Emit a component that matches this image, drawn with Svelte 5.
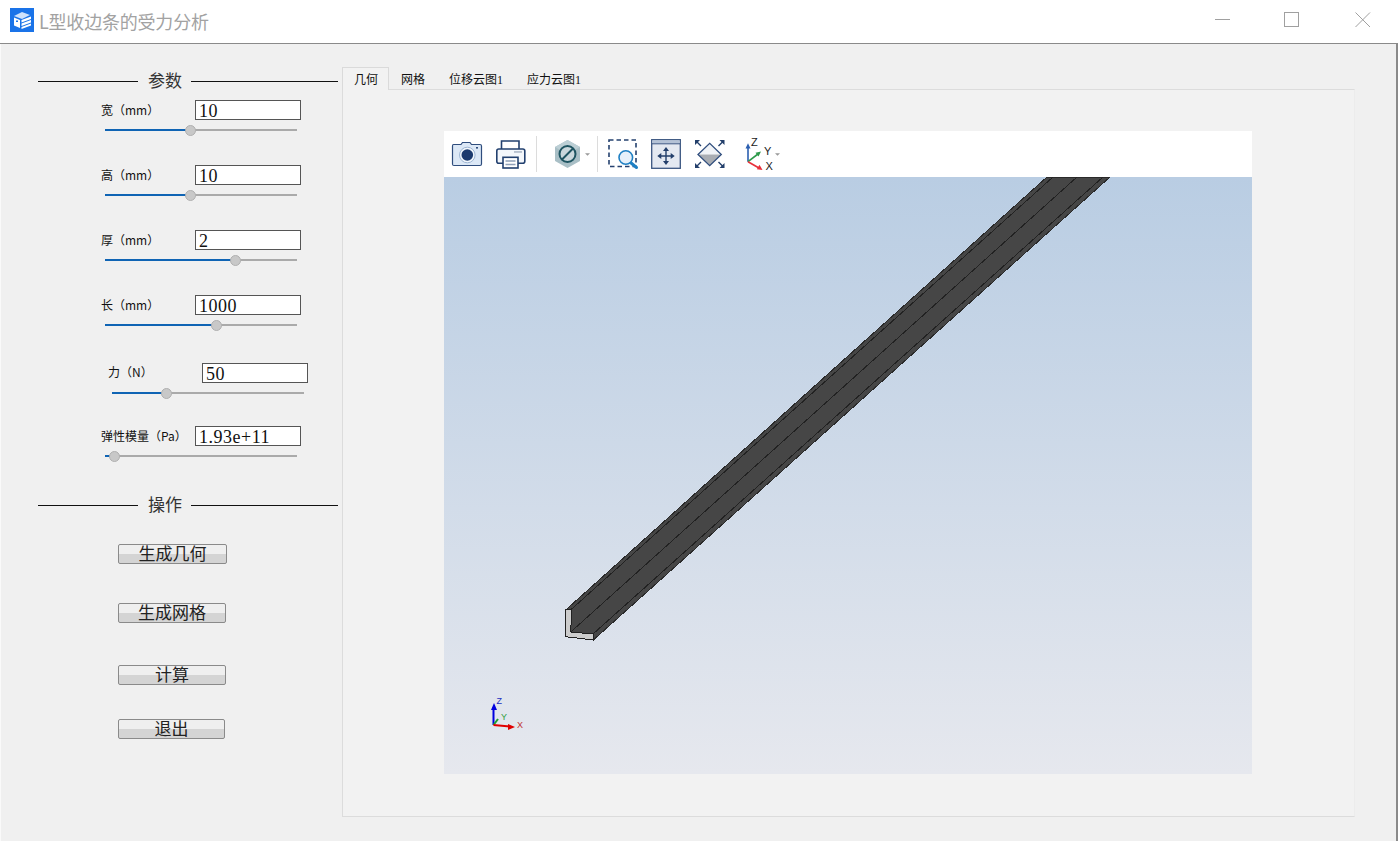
<script>
	const fields = [
		{ label: '宽（mm）', value: '10', thumb: 85.5, height: 65 },
		{ label: '高（mm）', value: '10', thumb: 85.5, height: 65 },
		{ label: '厚（mm）', value: '2', thumb: 130.5, height: 65 },
		{ label: '长（mm）', value: '1000', thumb: 111.5, height: 68 },
		{ label: '力（N）', value: '50', thumb: 54.5, height: 63, shifted: true },
		{ label: '弹性模量（Pa）', value: '1.93e+11', thumb: 9, height: 67 }
	];
	const buttons = [
		{ text: '生成几何', width: 109, top: 27 },
		{ text: '生成网格', width: 108, top: 39 },
		{ text: '计算', width: 108, top: 42 },
		{ text: '退出', width: 107, top: 34 }
	];
	const tabs = ['几何', '网格', '位移云图1', '应力云图1'];
</script>

<div class="titlebar">
	<svg class="app-icon" width="24" height="24" viewBox="0 0 24 24">
		<rect width="24" height="24" fill="#1a73e8" />
		<path d="M4 8 L12 4 L20 7 L12 11 Z" fill="#cfe2fb" />
		<path d="M4 9.5 L10 12 V20 L4 17.5 Z" fill="#fff" />
		<path d="M11.5 12 L21 8.5 V11 L11.5 14.5 Z M11.5 15.5 L21 12 V14.5 L11.5 18 Z M11.5 19 L21 15.5 V17.5 L11.5 21 Z" fill="#fff" />
		<path d="M6 12.5 H8 V14 H6 Z" fill="#1a73e8" />
	</svg>
	<span class="app-title">L型收边条的受力分析</span>
	<div class="win-controls">
		<svg class="win-min" width="16" height="16" viewBox="0 0 16 16"><path d="M0 7.5 H15" stroke="#a0a0a0" /></svg>
		<svg class="win-max" width="16" height="16" viewBox="0 0 16 16"><rect x="0.5" y="0.5" width="14" height="14" fill="none" stroke="#a0a0a0" /></svg>
		<svg class="win-close" width="16" height="16" viewBox="0 0 16 16"><path d="M0.5 0.5 L15 15 M15 0.5 L0.5 15" stroke="#a0a0a0" /></svg>
	</div>
</div>

<div class="main">
	<aside class="side">
		<div class="section-head first">
			<i></i><span>参数</span><i></i>
		</div>
		<div class="fields">
			{#each fields as f}
				<div class="field" class:shifted={f.shifted} style="height: {f.height}px">
					<div class="field-row">
						<span class="field-label">{f.label}</span>
						<input class="field-input" value={f.value} />
					</div>
					<div class="slider">
						<div class="slider-fill" style="width: {f.thumb}px"></div>
						<div class="slider-thumb" style="left: {f.thumb - 5.5}px"></div>
					</div>
				</div>
			{/each}
		</div>
		<div class="section-head">
			<i></i><span>操作</span><i></i>
		</div>
		<div class="actions">
			{#each buttons as b}
				<button class="action" style="width: {b.width}px; margin-top: {b.top}px">{b.text}</button>
			{/each}
		</div>
	</aside>

	<section class="content">
		<div class="tabs">
			{#each tabs as t, i}
				<div class="tab" class:active={i === 0}>{t}</div>
			{/each}
		</div>
		<div class="pane">
			<div class="viewer">
				<div class="toolbar">
					<svg class="ic-camera" width="30" height="30" viewBox="0 0 30 30">
						<path d="M1.5 5.5 H9 L10.5 3.5 H18 L19.5 5.5 H28 Q29.5 5.5 29.5 7 V25 Q29.5 26.5 28 26.5 H2 Q0.5 26.5 0.5 25 V7 Q0.5 5.5 1.5 5.5 Z" fill="#dce8f6" stroke="#2f4d7d" stroke-width="1.2" />
						<circle cx="15.3" cy="16" r="7.8" fill="#f2f7fc" stroke="#9db5d3" />
						<circle cx="15.3" cy="16" r="5.8" fill="#1c3a6e" />
						<rect x="24" y="8" width="2" height="1.6" fill="#2f4d7d" />
					</svg>
					<svg class="ic-printer" width="30" height="30" viewBox="0 0 30 30">
						<path d="M5.5 10 V2 H23 V10" fill="#fff" stroke="#22406f" stroke-width="1.6" />
						<rect x="0.8" y="10" width="28" height="14.3" rx="2" fill="#f4f7fb" stroke="#22406f" stroke-width="1.6" />
						<rect x="18" y="12.2" width="8" height="1.5" fill="#a8b4c4" />
						<rect x="7" y="18.3" width="15" height="10.7" fill="#fff" stroke="#22406f" stroke-width="1.6" />
						<path d="M9.5 22 H19.5 M9.5 25.5 H19.5" stroke="#8fa0b8" stroke-width="1.4" />
					</svg>
					<span class="tool-sep"></span>
					<svg class="ic-hex" width="36" height="30" viewBox="0 0 36 30">
						<path d="M12.5 1 L25 8 V22 L12.5 29 L0 22 V8 Z" fill="#a9bfc6" />
						<path d="M12.5 1 L25 8 L12.5 15 L0 8 Z" fill="#bccfd5" />
						<circle cx="12.5" cy="15" r="8" fill="#c9d7dc" stroke="#1e5461" stroke-width="2" />
						<path d="M7 20.5 L18 9.5" stroke="#1e5461" stroke-width="2" />
						<path d="M30 14.3 H35 L32.5 16.8 Z" fill="#9a9a9a" />
					</svg>
					<span class="tool-sep second"></span>
					<svg class="ic-zoom" width="30" height="30" viewBox="0 0 30 30">
						<rect x="1" y="1" width="27" height="26.5" fill="none" stroke="#25416f" stroke-width="1.6" stroke-dasharray="4.5 3" />
						<path d="M22.5 23.5 L28.5 28.5" stroke="#1f80c4" stroke-width="3" stroke-linecap="round" />
						<circle cx="17.8" cy="18.5" r="6.8" fill="#e6f0fa" stroke="#1f80c4" stroke-width="1.6" />
					</svg>
					<svg class="ic-fit" width="30" height="30" viewBox="0 0 30 30">
						<rect x="0.7" y="0.7" width="28.6" height="28.6" fill="#e4e9f1" stroke="#3a5580" stroke-width="1.3" />
						<rect x="1.3" y="1.3" width="27.4" height="3" fill="#b4c2d6" />
						<path d="M1 4.8 H29" stroke="#3a5580" />
						<path d="M15 10 V24 M8 17 H22" stroke="#233f6b" stroke-width="1.4" />
						<path d="M15 8 L12 12 H18 Z M15 26 L12 22 H18 Z M6.3 17 L10.3 14 V20 Z M23.7 17 L19.7 14 V20 Z" fill="#233f6b" />
					</svg>
					<svg class="ic-diamond" width="33" height="30" viewBox="0 0 33 30">
						<path d="M3 15.5 L14.7 4.3 L26.3 15.5 Z" fill="#f0f3f7" />
						<path d="M3 15.5 L14.7 26.7 L26.3 15.5 Z" fill="#a9adb3" />
						<path d="M3 15.5 L14.7 4.3 L26.3 15.5 L14.7 26.7 Z" fill="none" stroke="#2f4d7d" stroke-width="1.3" />
						<path d="M1 2 L6 7 M28.5 2 L23.5 7 M1 28 L6 23 M28.5 28 L23.5 23" stroke="#233f6b" stroke-width="1.4" />
						<path d="M0 1 H5 L0 6 Z M29.5 1 H24.5 L29.5 6 Z M0 29 H5 L0 24 Z M29.5 29 H24.5 L29.5 24 Z" fill="#233f6b" />
					</svg>
					<svg class="ic-axes" width="36" height="30" viewBox="0 0 36 30">
						<path d="M3 22.7 V8" stroke="#2b5fb0" stroke-width="1.6" />
						<path d="M3 4.3 L0.5 9.5 H5.5 Z" fill="#2b5fb0" />
						<path d="M3 22.7 L13 15" stroke="#2e9a4a" stroke-width="1.6" />
						<path d="M16 12.5 L10.5 13.8 L13.5 17.5 Z" fill="#2e9a4a" />
						<path d="M3 22.7 L14 29" stroke="#e8303a" stroke-width="1.6" />
						<path d="M17.5 31 L11.8 30.2 L14.5 25.8 Z" fill="#e8303a" />
						<text x="6" y="6.5">Z</text>
						<text x="19" y="15.5">Y</text>
						<text x="20.5" y="30.5">X</text>
						<path d="M30 14.3 H35 L32.5 16.8 Z" fill="#9a9a9a" />
					</svg>
				</div>
				<div class="viewport">
					<svg width="808" height="597" viewBox="0 0 808 597">
						<g shape-rendering="crispEdges">
							<path d="M121.7 433 L603 0 H666 L149.3 463 L121.7 459.7 Z" fill="#464646" stroke="#2a2a2a" />
							<path d="M127.7 432 L609 0 M126.7 455 L633 0 M149 457 L659 0" stroke="#222" fill="none" />
							<path d="M121.7 433 L127.7 432 L126.7 455 L149 457 L149.3 463 L121.7 459.7 Z" fill="#cccccc" stroke="#222" />
						</g>
						<path d="M49.5 548 V530" stroke="#0000e0" stroke-width="2" />
						<path d="M50 526 L47 533 H53 Z" fill="#0000e0" />
						<path d="M49.5 548 L54 542" stroke="#20a030" stroke-width="2" />
						<path d="M49.5 548 L66 549.5" stroke="#e00000" stroke-width="2" />
						<path d="M71 550 L64 547 V553 Z" fill="#e00000" />
						<text class="triad z" x="52.5" y="527">Z</text>
						<text class="triad y" x="57" y="543">Y</text>
						<text class="triad x" x="73" y="551">X</text>
					</svg>
				</div>
			</div>
		</div>
	</section>
</div>

<style>
	:global(body) {
		background: #fff;
		overflow: hidden;
	}

	.titlebar {
		display: flex;
		align-items: center;
		width: 1397px;
		height: 43px;
		padding-left: 10px;
		box-sizing: border-box;
		background: #fff;
		font-family: "Noto Sans CJK SC", "Noto Sans", sans-serif;
	}

	.app-icon {
		flex: none;
		margin-top: -3px;
	}

	.app-title {
		margin-left: 5px;
		margin-top: -1px;
		font-size: 18px;
		letter-spacing: -0.2px;
		color: #a2a2a2;
	}

	.win-controls {
		display: flex;
		margin-left: auto;
		margin-top: -3px;
	}

	.win-min {
		margin-right: 53px;
	}

	.win-max {
		margin-right: 55px;
	}

	.win-close {
		margin-right: 26px;
	}

	.main {
		display: flex;
		box-sizing: border-box;
		width: 1398px;
		height: 798px;
		background: #f0f0f0;
		border-top: 1px solid #8a8a8a;
		border-right: 2px solid #8a8a8a;
		box-shadow: inset 1px 0 0 #fafafa;
	}

	.side {
		flex: none;
		width: 342px;
		font-family: "Noto Sans CJK SC", "Noto Sans", sans-serif;
	}

	.section-head {
		display: flex;
		align-items: center;
		width: 300px;
		height: 24px;
		margin-left: 38px;
		font-size: 17px;
		color: #333;
	}

	.section-head.first {
		margin-top: 25px;
	}

	.section-head i {
		flex: 1;
		height: 1px;
		background: #111;
	}

	.section-head i:first-child {
		flex: none;
		width: 100px;
	}

	.section-head span {
		margin: 0 9px 0 10px;
		line-height: 22px;
		margin-top: -2px;
	}

	.fields {
		margin-top: 7px;
	}

	.field {
		margin-left: 101px;
	}

	.field.shifted {
		margin-left: 108px;
	}

	.field-row {
		display: flex;
		align-items: center;
		height: 20px;
	}

	.field-label {
		flex: none;
		width: 94px;
		margin-top: -1px;
		font-size: 12px;
		line-height: 18px;
		color: #111;
		white-space: nowrap;
	}

	.field.shifted .field-label {
		margin-top: -3px;
	}

	.field-input {
		box-sizing: border-box;
		width: 106px;
		height: 20px;
		padding: 2px 0 0 3px;
		border: 1px solid #555;
		border-radius: 0;
		background: #fff;
		font-family: "Liberation Serif", serif;
		font-size: 18px;
		letter-spacing: 0.5px;
		color: #111;
		outline: none;
	}

	.slider {
		position: relative;
		width: 192px;
		height: 2px;
		margin: 9px 0 0 4px;
		background: #aaa;
	}

	.slider-fill {
		height: 100%;
		background: #0f64b4;
	}

	.slider-thumb {
		position: absolute;
		top: -4.5px;
		box-sizing: border-box;
		width: 11px;
		height: 11px;
		border: 1px solid #b0b0b0;
		border-radius: 50%;
		background: #c8c8c8;
	}

	.actions {
		display: flex;
		flex-direction: column;
		align-items: flex-start;
		margin-left: 118px;
	}

	.action {
		box-sizing: border-box;
		height: 20px;
		padding: 0 0 2px;
		border: 1px solid #8a8a8a;
		border-radius: 2px;
		background: linear-gradient(#efefef 50%, #d4d4d4 50%);
		font-family: "Noto Sans CJK SC", sans-serif;
		font-size: 17px;
		line-height: 16px;
		color: #222;
	}

	.content {
		flex: 1;
		padding-top: 23px;
		font-family: "Noto Sans CJK SC", "Noto Sans", sans-serif;
	}

	.tabs {
		display: flex;
		height: 22px;
	}

	.tab {
		box-sizing: border-box;
		padding: 0 12px;
		font-family: "Liberation Serif", "Noto Sans CJK SC", serif;
		font-size: 12px;
		line-height: 24px;
		color: #111;
		border: 1px solid transparent;
		border-width: 1px 0 0;
	}

	.tab.active {
		position: relative;
		z-index: 1;
		height: 23px;
		padding: 0 10px 0 11px;
		border: 1px solid #dadada;
		border-bottom: 0;
		background: #f2f2f2;
	}

	.pane {
		box-sizing: border-box;
		width: 1013px;
		height: 728px;
		padding: 41px 0 0 101px;
		border: 1px solid #dcdcdc;
		border-right-color: #ececec;
		background: #f2f2f2;
	}

	.viewer {
		width: 808px;
	}

	.toolbar {
		display: flex;
		align-items: center;
		height: 46px;
		padding-left: 8px;
		box-sizing: border-box;
		background: #fff;
	}

	.toolbar svg {
		flex: none;
		overflow: visible;
	}

	.ic-printer {
		margin-left: 14px;
	}

	.tool-sep {
		flex: none;
		width: 1px;
		height: 36px;
		margin-left: 10px;
		background: #dcdcdc;
	}

	.tool-sep.second {
		margin-left: 6px;
	}

	.ic-hex {
		margin-left: 18px;
	}

	.ic-zoom {
		margin-left: 10px;
	}

	.ic-fit {
		margin-left: 13px;
	}

	.ic-diamond {
		margin-left: 14px;
	}

	.ic-axes {
		margin-left: 17px;
	}

	.ic-axes text {
		font-family: "Liberation Sans", sans-serif;
		font-size: 11px;
		fill: #222;
	}

	.viewport {
		height: 597px;
		background: linear-gradient(#b9cde3, #e6e8ee);
	}

	.viewport svg {
		display: block;
	}

	.triad {
		font-family: "Liberation Sans", sans-serif;
		font-size: 9px;
	}

	.triad.z {
		fill: #2030c0;
	}

	.triad.y {
		fill: #30a040;
	}

	.triad.x {
		fill: #c03030;
	}
</style>
